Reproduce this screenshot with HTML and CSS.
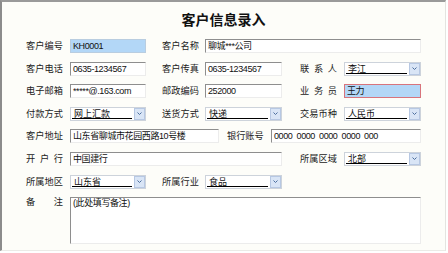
FILE: index.html
```html
<!DOCTYPE html>
<html lang="zh-CN">
<head>
  <meta charset="UTF-8">
  <title>客户信息录入</title>
  <link rel="stylesheet" href="styles.css">
</head>
<body>
  <div class="form">
    <h1 class="title">客户信息录入</h1>

    <div class="rows">
      <div class="row">
        <span class="lbl">客户编号</span>
        <div class="field hl">KH0001</div>
        <span class="lbl">客户名称</span>
        <div class="field span3">聊城***公司</div>
      </div>

      <div class="row">
        <span class="lbl">客户电话</span>
        <div class="field">0635-1234567</div>
        <span class="lbl">客户传真</span>
        <div class="field w77">0635-1234567</div>
        <span class="lbl">联系人</span>
        <div class="select w77"><span class="val">李江</span><span class="arrow"><svg width="5" height="3" viewBox="0 0 5 3"><path d="M0.5 0.5 L2.5 2.5 L4.5 0.5" fill="none" stroke="#4d6f9e" stroke-width="1"/></svg></span></div>
      </div>

      <div class="row">
        <span class="lbl">电子邮箱</span>
        <div class="field">*****@.163.com</div>
        <span class="lbl">邮政编码</span>
        <div class="field w77">252000</div>
        <span class="lbl">业务员</span>
        <div class="field w77 hl red">王力</div>
      </div>

      <div class="row">
        <span class="lbl">付款方式</span>
        <div class="select"><span class="val">网上汇款</span><span class="arrow"><svg width="5" height="3" viewBox="0 0 5 3"><path d="M0.5 0.5 L2.5 2.5 L4.5 0.5" fill="none" stroke="#4d6f9e" stroke-width="1"/></svg></span></div>
        <span class="lbl">送货方式</span>
        <div class="select w77"><span class="val">快递</span><span class="arrow"><svg width="5" height="3" viewBox="0 0 5 3"><path d="M0.5 0.5 L2.5 2.5 L4.5 0.5" fill="none" stroke="#4d6f9e" stroke-width="1"/></svg></span></div>
        <span class="lbl">交易币种</span>
        <div class="select w77"><span class="val">人民币</span><span class="arrow"><svg width="5" height="3" viewBox="0 0 5 3"><path d="M0.5 0.5 L2.5 2.5 L4.5 0.5" fill="none" stroke="#4d6f9e" stroke-width="1"/></svg></span></div>
      </div>

      <div class="row free">
        <span class="lbl">客户地址</span>
        <div class="field addr">山东省聊城市花园西路10号楼</div>
        <span class="lbl bank">银行账号</span>
        <div class="field account">0000 0000 0000 0000 000</div>
      </div>

      <div class="row">
        <span class="lbl">开户行</span>
        <div class="field wide">中国建行</div>
        <span class="lbl">所属区域</span>
        <div class="select w77"><span class="val">北部</span><span class="arrow"><svg width="5" height="3" viewBox="0 0 5 3"><path d="M0.5 0.5 L2.5 2.5 L4.5 0.5" fill="none" stroke="#4d6f9e" stroke-width="1"/></svg></span></div>
      </div>

      <div class="row">
        <span class="lbl">所属地区</span>
        <div class="select"><span class="val">山东省</span><span class="arrow"><svg width="5" height="3" viewBox="0 0 5 3"><path d="M0.5 0.5 L2.5 2.5 L4.5 0.5" fill="none" stroke="#4d6f9e" stroke-width="1"/></svg></span></div>
        <span class="lbl">所属行业</span>
        <div class="select w77"><span class="val">食品</span><span class="arrow"><svg width="5" height="3" viewBox="0 0 5 3"><path d="M0.5 0.5 L2.5 2.5 L4.5 0.5" fill="none" stroke="#4d6f9e" stroke-width="1"/></svg></span></div>
      </div>

      <div class="row">
        <span class="lbl top">备注</span>
        <div class="field memo">(此处填写备注)</div>
      </div>
    </div>
  </div>
</body>
</html>
```

FILE: styles.css
```css
body {
  margin: 0;
  background: #fff;
  font-family: "Liberation Sans", "Noto Sans CJK SC", sans-serif;
  color: #222;
}
.form {
  width: 446px;
  height: 251px;
  box-sizing: border-box;
  background: #fdfdf9;
  border-top: 2px solid #9a9a9a;
  border-left: 2px solid #8c8c8c;
  border-right: 1px solid #e4e4e0;
  border-bottom: 1px solid #ebebe7;
  padding: 10px 0 0 24px;
}
.title {
  margin: 0 0 11px;
  font-size: 14px;
  line-height: 16px;
  font-weight: bold;
  text-align: center;
  color: #111;
  padding-right: 24px;
}
.rows {
  display: flex;
  flex-direction: column;
  gap: 8.6px;
}
.row {
  display: grid;
  grid-template-columns: 44px 92px 43px 95px 44px 77px;
  align-items: center;
  height: 14px;
}
.row.free {
  display: flex;
}
.lbl {
  width: 37px;
  font-size: 9.2px;
  line-height: 14px;
  text-align: justify;
  text-align-last: justify;
  color: #222;
  white-space: nowrap;
}
.lbl.top {
  align-self: start;
  line-height: 11px;
}
.lbl.bank {
  margin: 0 8px 0 8px;
  width: 36px;
}
.free .lbl:first-child {
  margin-right: 7px;
}
.field {
  width: 76px;
  height: 14px;
  box-sizing: border-box;
  background: #fff;
  border-top: 1px solid #8e8e8e;
  border-left: 1px solid #8e8e8e;
  border-right: 1px solid #ececec;
  border-bottom: 1px solid #ececec;
  font-size: 9px;
  line-height: 12px;
  letter-spacing: -0.4px;
  padding-left: 2px;
  white-space: nowrap;
  overflow: hidden;
  color: #111;
}
.w77 {
  width: 77px;
}
.field.hl {
  background: #b3d7f7;
  border-color: #b9cde0;
}
.field.red {
  border: 1px solid #d8747c;
}
.field.span3 {
  grid-column: 4 / 7;
  width: 216px;
}
.field.wide {
  grid-column: 2 / 5;
  width: 212px;
}
.field.addr {
  width: 149px;
}
.field.account {
  width: 150px;
  word-spacing: 2px;
}
.field.memo {
  grid-column: 2 / 7;
  width: 351px;
  height: 47px;
  align-self: start;
  line-height: 11px;
}
.select {
  width: 76px;
  height: 14px;
  box-sizing: border-box;
  display: flex;
  align-items: stretch;
  background: #fff;
  border: 1px solid #cdd3db;
  padding: 1px;
}
.select.w77 {
  width: 77px;
}
.select .val {
  flex: 1;
  font-size: 9px;
  line-height: 10px;
  padding-left: 2px;
  border-bottom: 1px solid #000;
  margin-right: 2px;
  color: #111;
  white-space: nowrap;
  overflow: hidden;
}
.select .arrow {
  width: 9px;
  display: flex;
  align-items: center;
  justify-content: center;
  background: #d9e5f6;
  border: 1px solid #b7c8e3;
  margin: -1px -1px -1px 0;
}
```
